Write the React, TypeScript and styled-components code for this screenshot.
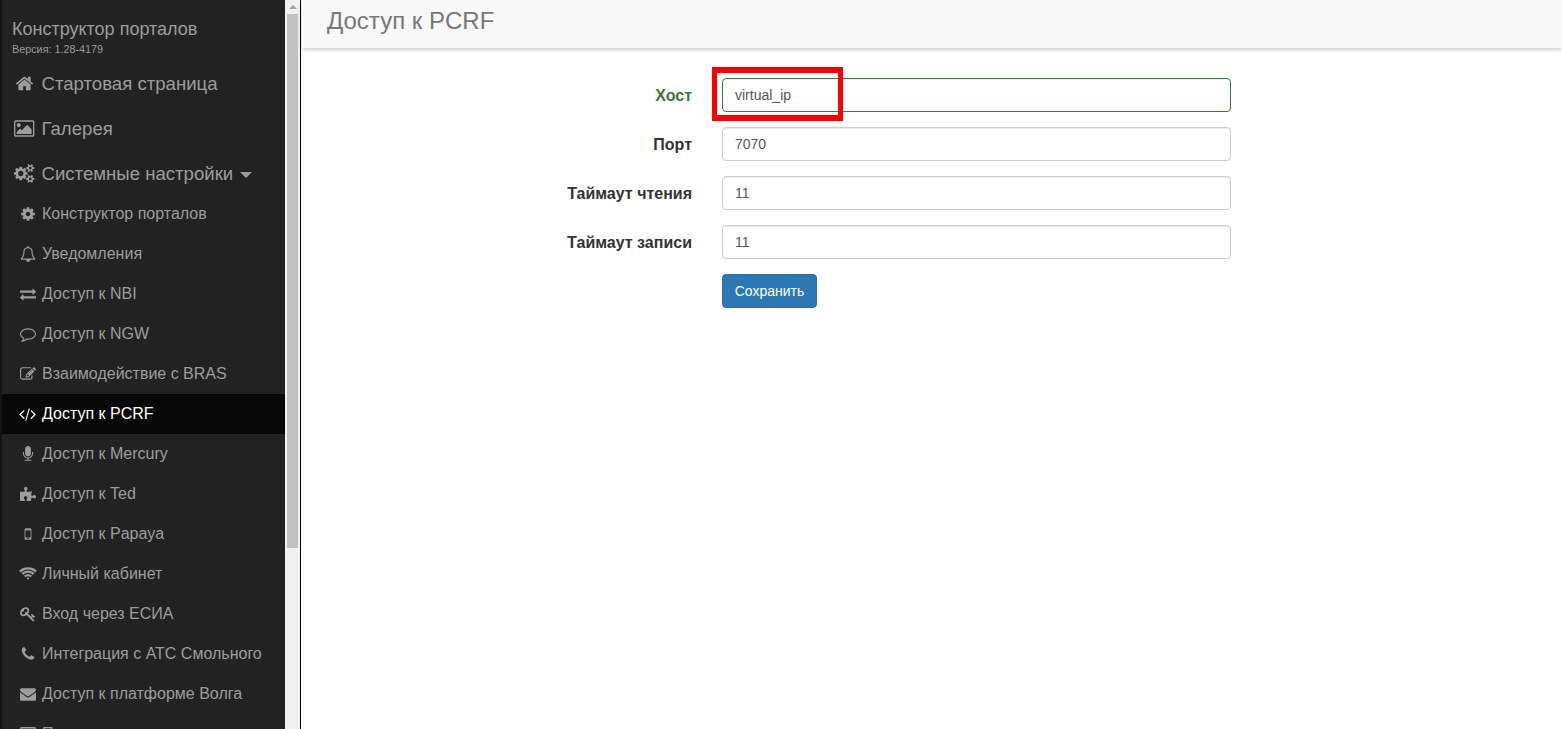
import React from 'react';
import styled, { createGlobalStyle } from 'styled-components';
import { FaPuzzlePiece, FaRegListAlt } from 'react-icons/fa';

const Global = createGlobalStyle`
  html, body { margin: 0; padding: 0; height: 100%; overflow: hidden; background: #fff; }
  #root { height: 100%; }
  * { box-sizing: border-box; }
`;
const Page = styled.div`
  display: flex; width: 1562px; height: 729px; overflow: hidden;
  font-family: "Liberation Sans", Arial, sans-serif; font-size: 14px; color: #333;
`;
const Sidebar = styled.nav`
  width: 285px; height: 729px; flex: none; background: #222; overflow: hidden;
  border-left: 2px solid #141414; color: #9d9d9d;
`;
const Brand = styled.div`padding: 19px 0 0 10px; height: 61px;`;
const BrandTitle = styled.div`font-size: 18px; line-height: 20px;`;
const BrandVersion = styled.div`font-size: 10.8px; line-height: 13px; margin-top: 4px;`;
const TopItem = styled.div`
  height: 45px; display: flex; align-items: center; font-size: 18.6px; padding-left: 10px;
`;
const TopIcon = styled.span`
  width: 25px; flex: none; display: flex; justify-content: center; margin-right: 4.5px; font-size: 19px;
`;
const Caret = styled.span`
  width: 0; height: 0; margin-left: 7px; margin-top: 2px;
  border-left: 6px solid transparent; border-right: 6px solid transparent; border-top: 6px solid #9d9d9d;
`;
const SubList = styled.div`margin-top: -2px;`;
const SubItem = styled.div<{ $active?: boolean }>`
  height: 40px; display: flex; align-items: center; font-size: 16px; padding-left: 15px;
  background: ${p => (p.$active ? '#080808' : 'transparent')};
  color: ${p => (p.$active ? '#fff' : '#9d9d9d')};
`;
const SubIcon = styled.span`
  width: 21px; height: 16px; flex: none; display: flex; align-items: center; justify-content: center; margin-right: 4px; font-size: 16px;
`;
const Glyph = styled.svg`height: 1em; flex: none; fill: currentColor; display: block; overflow: visible;`;
const Track = styled.div`
  width: 15px; height: 729px; flex: none; background: #f1f1f1;
  display: flex; flex-direction: column; align-items: center;
`;
const ArrowBox = styled.div`height: 14px; width: 100%; display: flex; align-items: center; justify-content: center;`;
const Arrow = styled.div`
  width: 0; height: 0; border-left: 4px solid transparent; border-right: 4px solid transparent; border-bottom: 4px solid #a3a3a3;
`;
const Thumb = styled.div`width: 11px; height: 534px; background: #c1c1c1;`;
const Divider = styled.div`width: 1px; flex: none; background: #000;`;
const Main = styled.main`flex: 1; min-width: 0; padding-left: 1px;`;
const Header = styled.header`
  height: 48px; background: #f8f8f8; box-shadow: 0 2px 4px rgba(0,0,0,.2); padding-left: 25px;
  font-size: 24px; line-height: 42px; color: #777;
`;
const Form = styled.form`
  margin-top: 30px; display: flex; flex-direction: column; gap: 15px; position: relative;
`;
const Row = styled.div`display: flex; align-items: center; gap: 30px;`;
const Label = styled.label<{ $ok?: boolean }>`
  width: 390px; text-align: right; font-size: 16px; font-weight: 700; padding-top: 2px;
  color: ${p => (p.$ok ? '#3c763d' : '#333')};
`;
const Input = styled.input<{ $ok?: boolean }>`
  width: 509px; height: 34px; padding: 6px 12px; font: 14px/20px "Liberation Sans", Arial, sans-serif;
  color: #555; background: #fff; border: 1px solid ${p => (p.$ok ? '#3c763d' : '#ccc')}; border-radius: 4px;
  outline: none; box-shadow: inset 0 1px 1px rgba(0,0,0,.075);
`;
const Button = styled.button`
  width: 95px; height: 34px; padding: 6px 0; font: 14px/20px "Liberation Sans", Arial, sans-serif; color: #fff;
  background: #2b78b4; border: 1px solid #2e6da4; border-radius: 4px;
`;
const Spacer = styled.div`width: 390px;`;
const Highlight = styled.div`
  position: absolute; left: 410px; top: -11px; width: 131px; height: 54px;
  border-style: solid; border-color: #f00; border-width: 6px 5px; pointer-events: none;
`;

const P = {
  home: 'M1472 992v480q0 26-19 45t-45 19h-384v-384h-256v384h-384q-26 0-45-19t-19-45v-480q0-1 .5-3t.5-3l575-474 575 474q1 2 1 6zm223-69l-62 74q-8 9-21 11h-3q-13 0-21-7l-692-577-692 577q-12 8-24 7-13-2-21-11l-62-74q-8-10-7-23.500t11-21.500l719-599q32-26 76-26t76 26l244 204v-195q0-14 9-23t23-9h192q14 0 23 9t9 23v408l219 182q10 8 11 21.500t-7 23.500z',
  image: 'M576 576q0 80-56 136t-136 56-136-56-56-136 56-136 136-56 136 56 56 136zm1024 384v448h-1408v-192l320-320 160 160 512-512zm96-704h-1600q-13 0-22.500 9.500t-9.500 22.500v1216q0 13 9.500 22.500t22.500 9.500h1600q13 0 22.500-9.500t9.500-22.500v-1216q0-13-9.500-22.500t-22.500-9.500zm160 32v1216q0 66-47 113t-113 47h-1600q-66 0-113-47t-47-113v-1216q0-66 47-113t113-47h1600q66 0 113 47t47 113z',
  cogs: 'M896 896q0-106-75-181t-181-75-181 75-75 181 75 181 181 75 181-75 75-181zm768 512q0-52-38-90t-90-38-90 38-38 90q0 53 37.500 90.500t90.500 37.500 90.500-37.500 37.500-90.500zm0-1024q0-52-38-90t-90-38-90 38-38 90q0 53 37.500 90.500t90.500 37.500 90.500-37.500 37.500-90.500zm-384 421v185q0 10-7 19.500t-16 10.500l-155 24q-11 35-32 76 34 48 90 115 7 11 7 20 0 12-7 19-23 30-82.500 89.500t-78.500 59.500q-11 0-21-7l-115-90q-37 19-77 31-11 108-23 155-7 24-30 24h-186q-11 0-20-7.500t-10-17.500l-23-153q-34-10-75-31l-118 89q-7 7-20 7-11 0-21-8-144-133-144-160 0-9 7-19 10-14 41-53t47-61q-23-44-35-82l-152-24q-10-1-17-9.500t-7-19.500v-185q0-10 7-19.500t16-10.500l155-24q11-35 32-76-34-48-90-115-7-11-7-20 0-12 7-20 22-30 82-89t79-59q11 0 21 7l115 90q34-18 77-32 11-108 23-154 7-24 30-24h186q11 0 20 7.500t10 17.500l23 153q34 10 75 31l118-89q8-7 20-7 11 0 21 8 144 133 144 160 0 8-7 19-12 16-42 54t-45 60q23 48 34 82l152 23q10 2 17 10.500t7 19.500zm640 533v140q0 16-149 31-12 27-30 52 51 113 51 138 0 4-4 7-122 71-124 71-8 0-46-47t-52-68q-20 2-30 2t-30-2q-14 21-52 68t-46 47q-2 0-124-71-4-3-4-7 0-25 51-138-18-25-30-52-149-15-149-31v-140q0-16 149-31 13-29 30-52-51-113-51-138 0-4 4-7 4-2 35-20t59-34 30-16q8 0 46 46.500t52 67.500q20-2 30-2t30 2q51-71 92-112l6-2q4 0 124 70 4 3 4 7 0 25-51 138 17 23 30 52 149 15 149 31zm0-1024v140q0 16-149 31-12 27-30 52 51 113 51 138 0 4-4 7-122 71-124 71-8 0-46-47t-52-68q-20 2-30 2t-30-2q-14 21-52 68t-46 47q-2 0-124-71-4-3-4-7 0-25 51-138-18-25-30-52-149-15-149-31v-140q0-16 149-31 13-29 30-52-51-113-51-138 0-4 4-7 4-2 35-20t59-34 30-16q8 0 46 46.500t52 67.500q20-2 30-2t30 2q51-71 92-112l6-2q4 0 124 70 4 3 4 7 0 25-51 138 17 23 30 52 149 15 149 31z',
  cog: 'M1152 896q0-106-75-181t-181-75-181 75-75 181 75 181 181 75 181-75 75-181zm512-109v222q0 12-8 23t-20 13l-185 28q-19 54-39 91 35 50 107 138 10 12 10 25t-9 23q-27 37-99 108t-94 71q-12 0-26-9l-138-108q-44 23-91 38-16 136-29 186-7 28-36 28h-222q-14 0-24.500-8.500t-11.500-21.500l-28-184q-49-16-90-37l-141 107q-10 9-25 9-14 0-25-11-126-114-165-168-7-10-7-23 0-12 8-23 15-21 51-66.500t54-70.500q-27-50-41-99l-183-27q-13-2-21-12.500t-8-23.500v-222q0-12 8-23t19-13l186-28q14-46 39-92-40-57-107-138-10-12-10-24 0-10 9-23 26-36 98.500-107.500t94.500-71.500q13 0 26 10l138 107q44-23 91-38 16-136 29-186 7-28 36-28h222q14 0 24.500 8.500t11.500 21.500l28 184q49 16 90 37l142-107q9-9 24-9 13 0 25 10 129 119 165 170 7 8 7 22 0 12-8 23-15 21-51 66.500t-54 70.500q26 50 41 98l183 28q13 2 21 12.500t8 23.500z',
  bell: 'M912 1696q0-16-16-16-59 0-101.500-42.500t-42.500-101.500q0-16-16-16t-16 16q0 73 51.500 124.500t124.500 51.500q16 0 16-16zm-666-288h1300q-266-300-266-832 0-51-24-105t-69-103-121.500-80.500-169.500-31.500-169.500 31.500-121.500 80.500-69 103-24 105q0 532-266 832zm1482 0q0 52-38 90t-90 38h-448q0 106-75 181t-181 75-181-75-75-181h-448q-52 0-90-38t-38-90q50-42 91-88t85-119.500 74.500-158.500 50-206 19.500-260q0-152 117-282.500t307-158.500q-8-19-8-39 0-40 28-68t68-28 68 28 28 68q0 20-8 39 190 28 307 158.500t117 282.500q0 139 19.500 260t50 206 74.500 158.500 85 119.500 91 88z',
  exchange: 'M1792 1184v192q0 13-9.500 22.500t-22.500 9.500h-1376v192q0 13-9.500 22.500t-22.500 9.500q-12 0-24-10l-319-320q-9-9-9-22 0-14 9-23l320-320q9-9 23-9 13 0 22.500 9.500t9.500 22.500v192h1376q13 0 22.500 9.500t9.500 22.500zm0-544q0 14-9 23l-320 320q-9 9-23 9-13 0-22.500-9.500t-9.500-22.500v-192h-1376q-13 0-22.500-9.500t-9.500-22.500v-192q0-13 9.500-22.500t22.500-9.500h1376v-192q0-14 9-23t23-9q12 0 24 10l319 319q9 9 9 23z',
  comment: 'M896 384q-204 0-381.500 69.500t-282 187.500-104.500 255q0 112 71.500 213.500t201.500 175.500l87 50-27 96q-24 91-70 172 152-63 275-171l43-38 57 6q69 8 130 8 204 0 381.500-69.500t282-187.500 104.500-255-104.500-255-282-187.500-381.500-69.500zm896 512q0 174-120 321.500t-326 233-450 85.500q-70 0-145-8-198 175-460 242-49 14-114 22h-5q-15 0-27-10.500t-16-27.500v-1q-3-4-.5-12t2-10 4.500-9.500l6-9 7-8.500 8-9q7-8 31-34.500t34.500-38 31-39.500 32.500-51 27-59 26-76q-157-89-247.500-220t-90.500-281q0-174 120-321.500t326-233 450-85.500 450 85.500 326 233 120 321.500z',
  edit: 'M888 1184l116-116-152-152-116 116v56h96v96h56zm440-720q-16-16-33 1l-350 350q-17 17-1 33t33-1l350-350q17-17 1-33zm80 594v190q0 119-84.500 203.500t-203.500 84.500h-832q-119 0-203.500-84.500t-84.500-203.500v-832q0-119 84.500-203.500t203.500-84.500h832q63 0 117 25 15 7 18 23 3 17-9 29l-49 49q-14 14-32 8-23-6-45-6h-832q-66 0-113 47t-47 113v832q0 66 47 113t113 47h832q66 0 113-47t47-113v-126q0-13 9-22l64-64q15-15 35-7t20 29zm-96-738l288 288-672 672h-288v-288zm444 132l-92 92-288-288 92-92q28-28 68-28t68 28l152 152q28 28 28 68t-28 68z',
  code: 'M617 1399l-50 50q-10 10-23 10t-23-10l-466-466q-10-10-10-23t10-23l466-466q10-10 23-10t23 10l50 50q10 10 10 23t-10 23l-393 393 393 393q10 10 10 23t-10 23zm591-1067l-373 1291q-4 13-15.500 19.500t-23.500 2.500l-62-17q-13-4-19.500-15.500t-2.500-24.500l373-1291q4-13 15.500-19.500t23.500-2.500l62 17q13 4 19.500 15.500t2.500 24.500zm657 651l-466 466q-10 10-23 10t-23-10l-50-50q-10-10-10-23t10-23l393-393-393-393q-10-10-10-23t10-23l50-50q10-10 23-10t23 10l466 466q10 10 10 23t-10 23z',
  mic: 'M1472 704v128q0 221-147.500 384.500t-364.500 187.500v132h256q26 0 45 19t19 45-19 45-45 19h-640q-26 0-45-19t-19-45 19-45 45-19h256v-132q-217-24-364.500-187.500t-147.500-384.500v-128q0-26 19-45t45-19 45 19 19 45v128q0 185 131.500 316.500t316.500 131.500 316.500-131.500 131.500-316.500v-128q0-26 19-45t45-19 45 19 19 45zm-256-384v512q0 132-94 226t-226 94-226-94-94-226v-512q0-132 94-226t226-94 226 94 94 226z',
  mobile: 'M976 1408q0-33-23.500-56.500t-56.500-23.500-56.500 23.500-23.500 56.500 23.500 56.500 56.500 23.500 56.500-23.500 23.500-56.500zm208-160v-704q0-13-9.500-22.500t-22.500-9.500h-512q-13 0-22.500 9.500t-9.500 22.500v704q0 13 9.500 22.500t22.500 9.500h512q13 0 22.500-9.500t9.500-22.500zm-192-848q0-16-16-16h-160q-16 0-16 16t16 16h160q16 0 16-16zm288-16v1024q0 52-38 90t-90 38h-512q-52 0-90-38t-38-90v-1024q0-52 38-90t90-38h512q52 0 90 38t38 90z',
  wifi: 'M896 1523q-20 0-93-73.500t-73-93.500q0-32 62.500-54t103.500-22 103.500 22 62.500 54q0 20-73 93.500t-93 73.500zm270-271q-2 0-40-25t-101.500-50-128.500-25-128.500 25-101 50-40.500 25q-18 0-93.500-75t-75.500-93q0-13 10-23 78-77 196-121t233-44 233 44 196 121q10 10 10 23 0 18-75.500 93t-93.500 75zm273-272q-11 0-23-8-136-105-252-154.500t-268-49.500q-85 0-170.500 22t-149 53-113.500 62-79 53-31 22q-17 0-92-75t-75-93q0-12 10-22 132-132 320-205t380-73 380 73 320 205q10 10 10 22 0 18-75 93t-92 75zm271-271q-11 0-22-9-179-157-371.500-236.500t-420.500-79.500-420.500 79.500-371.500 236.500q-11 9-22 9-17 0-92.500-75t-75.500-93q0-13 10-23 187-186 445-288t527-102 527 102 445 288q10 10 10 23 0 18-75.500 93t-92.500 75z',
  key: 'M832 512q0-80-56-136t-136-56-136 56-56 136q0 42 19 83-41-19-83-19-80 0-136 56t-56 136 56 136 136 56 136-56 56-136q0-42-19-83 41 19 83 19 80 0 136-56t56-136zm851 704q0 17-49 66t-66 49q-9 0-28.500-16t-36.500-33-38.500-40-24.500-26l-96 96 220 220q28 28 28 68 0 42-39 81t-81 39q-40 0-68-28l-671-671q-176 131-365 131-163 0-265.500-102.500t-102.500-265.500q0-160 95-313t248-248 313-95q163 0 265.500 102.500t102.500 265.500q0 189-131 365l355 355 96-96q-3-3-26-24.500t-40-38.500-33-36.500-16-28.500q0-17 49-66t66-49q13 0 23 10 6 6 46 44.500t82 79.500 86.500 86 73 78 28.500 41z',
  phone: 'M1600 1240q0 27-10 70.500t-21 68.500q-21 50-122 106-94 51-186 51-27 0-53-3.500t-57.500-12.500-47-14.500-55.500-20.500-49-18q-98-35-175-83-127-79-264-216t-216-264q-48-77-83-175-3-9-18-49t-20.500-55.500-14.500-47-12.500-57.500-3.500-53q0-92 51-186 56-101 106-122 25-11 68.500-21t70.500-10q14 0 21 3 18 6 53 76 11 19 30 54t35 63.500 31 53.500q3 4 17.500 25t21.500 35.500 7 28.500q0 20-28.500 50t-62 55-62 53-28.500 46q0 9 5 22.500t8.500 20.500 14 24 11.500 19q76 137 174 235t235 174q2 1 19 11.500t24 14 20.500 8.500 22.500 5q18 0 46-28.500t53-62 55-62 50-28.500q14 0 28.500 7t35.500 21.500 25 17.500q25 15 53.500 31t63.500 35 54 30q70 35 76 53 3 7 3 21z',
  envelope: 'M1792 710v794q0 66-47 113t-113 47h-1472q-66 0-113-47t-47-113v-794q44 49 101 87 362 246 497 345 57 42 92.500 65.500t94.500 48 110 24.500h2q51 0 110-24.500t94.500-48 92.500-65.500q170-123 498-345 57-39 100-87zm0-294q0 79-49 151t-122 123q-376 261-468 325-10 7-42.500 30.500t-54 38-52 32.500-57.500 27-50 9h-2q-23 0-50-9t-57.500-27-52-32.500-54-38-42.500-30.500q-91-64-262-182.500t-205-142.500q-62-42-117-115.500t-55-136.500q0-78 41.500-130t118.500-52h1472q65 0 112.500 47t47.500 113z',
};

const Fa = ({ d, box = '0 0 1792 1792' }: { d: string; box?: string }) => (
  <Glyph viewBox={box} aria-hidden="true"><path d={d} /></Glyph>
);

const subs: [React.ReactNode, string, boolean?][] = [
  [<Fa d={P.cog} />, 'Конструктор порталов'],
  [<Fa d={P.bell} />, 'Уведомления'],
  [<Fa d={P.exchange} />, 'Доступ к NBI'],
  [<Fa d={P.comment} />, 'Доступ к NGW'],
  [<Fa d={P.edit} />, 'Взаимодействие с BRAS'],
  [<Fa d={P.code} box="0 0 1920 1792" />, 'Доступ к PCRF', true],
  [<Fa d={P.mic} />, 'Доступ к Mercury'],
  [<FaPuzzlePiece size={16} />, 'Доступ к Ted'],
  [<Fa d={P.mobile} />, 'Доступ к Papaya'],
  [<Fa d={P.wifi} />, 'Личный кабинет'],
  [<Fa d={P.key} />, 'Вход через ЕСИА'],
  [<Fa d={P.phone} />, 'Интеграция с АТС Смольного'],
  [<Fa d={P.envelope} />, 'Доступ к платформе Волга'],
  [<FaRegListAlt size={16} />, 'Прочее'],
];

const fields: [string, string, boolean?][] = [
  ['Хост', 'virtual_ip', true],
  ['Порт', '7070'],
  ['Таймаут чтения', '11'],
  ['Таймаут записи', '11'],
];

export default function App() {
  return (
    <Page>
      <Global />
      <Sidebar>
        <Brand>
          <BrandTitle>Конструктор порталов</BrandTitle>
          <BrandVersion>Версия: 1.28-4179</BrandVersion>
        </Brand>
        <TopItem><TopIcon><Fa d={P.home} /></TopIcon>Стартовая страница</TopItem>
        <TopItem><TopIcon><Fa d={P.image} box="-64 0 1920 1792" /></TopIcon>Галерея</TopItem>
        <TopItem><TopIcon><Fa d={P.cogs} box="0 0 1920 1792" /></TopIcon>Системные настройки<Caret /></TopItem>
        <SubList>
          {subs.map(([icon, text, active]) => (
            <SubItem key={text} $active={active}><SubIcon>{icon}</SubIcon>{text}</SubItem>
          ))}
        </SubList>
      </Sidebar>
      <Track>
        <ArrowBox><Arrow /></ArrowBox>
        <Thumb />
      </Track>
      <Divider />
      <Main>
        <Header>Доступ к PCRF</Header>
        <Form>
          {fields.map(([label, value, ok]) => (
            <Row key={label}>
              <Label $ok={ok}>{label}</Label>
              <Input $ok={ok} defaultValue={value} />
            </Row>
          ))}
          <Row><Spacer /><Button type="button">Сохранить</Button></Row>
          <Highlight />
        </Form>
      </Main>
    </Page>
  );
}
